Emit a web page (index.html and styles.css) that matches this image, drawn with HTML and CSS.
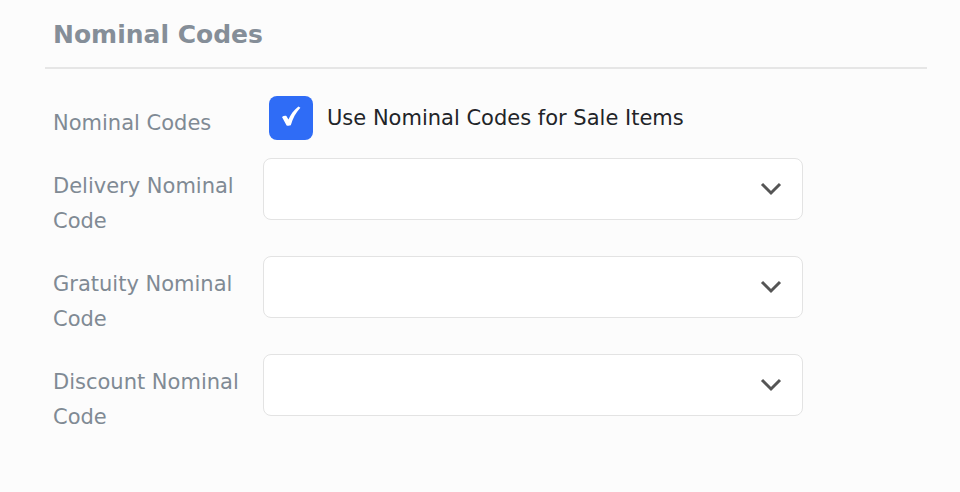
FILE: index.html
```html
<!DOCTYPE html>
<html>
<head>
<meta charset="utf-8">
<link rel="stylesheet" href="styles.css">
</head>
<body>
<div class="panel">
  <h2 class="title">Nominal Codes</h2>
  <div class="divider"></div>
  <div class="form">
    <div class="row row-check">
      <div class="label">Nominal Codes</div>
      <label class="check">
        <span class="box">
          <svg width="24" height="24" viewBox="0 0 24 24"><path d="M3 13 C4.4 11.8 6 11.4 7.4 11.9 L9.4 15.4 C11.6 10.4 14.6 6.2 19.4 2.4 L21.4 3.8 C17 8.4 13.8 14.2 11.8 21.2 C10.4 21.8 8.8 21.8 7.6 21.4 Z" fill="#fff"/></svg>
        </span>
        <span class="check-text">Use Nominal Codes for Sale Items</span>
      </label>
    </div>
    <div class="row">
      <div class="label">Delivery Nominal Code</div>
      <div class="select"><svg class="chev" width="22" height="14" viewBox="0 0 22 14"><path d="M2 2 L11 11 L20 2" fill="none" stroke="#555" stroke-width="3"/></svg></div>
    </div>
    <div class="row">
      <div class="label">Gratuity Nominal Code</div>
      <div class="select"><svg class="chev" width="22" height="14" viewBox="0 0 22 14"><path d="M2 2 L11 11 L20 2" fill="none" stroke="#555" stroke-width="3"/></svg></div>
    </div>
    <div class="row">
      <div class="label">Discount Nominal Code</div>
      <div class="select"><svg class="chev" width="22" height="14" viewBox="0 0 22 14"><path d="M2 2 L11 11 L20 2" fill="none" stroke="#555" stroke-width="3"/></svg></div>
    </div>
  </div>
</div>
</body>
</html>
```
FILE: styles.css
```css
html, body {
  margin: 0;
  padding: 0;
  background: #fcfcfc;
  font-family: "DejaVu Sans", Verdana, sans-serif;
}
.panel {
  padding: 18px 33px 0 45px;
}
.title {
  margin: 0 0 0 8px;
  font-size: 25px;
  line-height: 34px;
  font-weight: bold;
  color: #858e98;
}
.divider {
  height: 2px;
  background: #e6e6e6;
  margin-top: 15px;
}
.form {
  padding-top: 27px;
}
.row {
  display: flex;
  align-items: flex-start;
  height: 62px;
  margin-bottom: 36px;
}
.row-check {
  height: 44px;
  margin-bottom: 18px;
  align-items: center;
}
.label {
  width: 190px;
  margin-left: 8px;
  padding-right: 20px;
  font-size: 21px;
  line-height: 35px;
  color: #808a94;
  padding-top: 11px;
  flex-shrink: 0;
}
.row-check .label {
  padding-top: 10px;
}
.check {
  display: flex;
  align-items: center;
  margin-left: 6px;
}
.box {
  width: 44px;
  height: 44px;
  border-radius: 8px;
  background: #2f6cf6;
  display: flex;
  align-items: center;
  justify-content: center;
}
.box svg {
  display: block;
  margin-top: -4px;
}
.check-text {
  margin-left: 14px;
  font-size: 21px;
  color: #222428;
  margin-top: -1px;
}
.select {
  height: 60px;
  border: 1px solid #e3e3e3;
  border-radius: 8px;
  background: #fff;
  display: flex;
  align-items: center;
  justify-content: flex-end;
  padding-right: 20px;
  width: 518px;
}
.chev {
  display: block;
}
```
